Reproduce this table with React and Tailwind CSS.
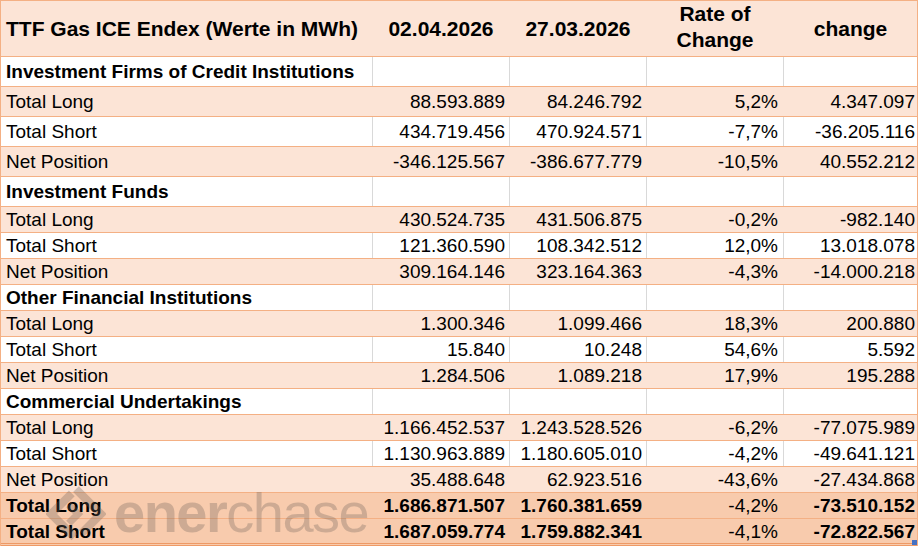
import React from "react";

const sections = [
  {
    title: "Investment Firms of Credit Institutions",
    tall: true,
    rows: [
      ["Total Long", "88.593.889", "84.246.792", "5,2%", "4.347.097"],
      ["Total Short", "434.719.456", "470.924.571", "-7,7%", "-36.205.116"],
      ["Net Position", "-346.125.567", "-386.677.779", "-10,5%", "40.552.212"],
    ],
  },
  {
    title: "Investment Funds",
    tall: true,
    rows: [
      ["Total Long", "430.524.735", "431.506.875", "-0,2%", "-982.140"],
      ["Total Short", "121.360.590", "108.342.512", "12,0%", "13.018.078"],
      ["Net Position", "309.164.146", "323.164.363", "-4,3%", "-14.000.218"],
    ],
  },
  {
    title: "Other Financial Institutions",
    rows: [
      ["Total Long", "1.300.346", "1.099.466", "18,3%", "200.880"],
      ["Total Short", "15.840", "10.248", "54,6%", "5.592"],
      ["Net Position", "1.284.506", "1.089.218", "17,9%", "195.288"],
    ],
  },
  {
    title: "Commercial Undertakings",
    rows: [
      ["Total Long", "1.166.452.537", "1.243.528.526", "-6,2%", "-77.075.989"],
      ["Total Short", "1.130.963.889", "1.180.605.010", "-4,2%", "-49.641.121"],
      ["Net Position", "35.488.648", "62.923.516", "-43,6%", "-27.434.868"],
    ],
  },
];

const totals = [
  ["Total Long", "1.686.871.507", "1.760.381.659", "-4,2%", "-73.510.152"],
  ["Total Short", "1.687.059.774", "1.759.882.341", "-4,1%", "-72.822.567"],
];

const grid = "grid grid-cols-[371px_137px_137px_137px_134px]";

function Row({ cells, bg, lines, h, bold, last }) {
  return (
    <div
      className={`${grid} ${bg} ${h} ${
        last ? "border-b-[3px] border-double border-[#ee9a66]" : "border-b border-[#f4b084]"
      }`}
    >
      <div className={`flex items-center pl-[5px] ${bold ? "font-bold" : ""}`}>{cells[0]}</div>
      {cells.slice(1).map((c, i) => (
        <div
          key={i}
          className={`flex items-center justify-end border-l ${lines} ${
            i === 2 ? "pr-[5px]" : i === 3 ? "pr-[2px]" : "pr-[4px]"
          } ${bold && i !== 2 ? "font-bold" : ""}`}
        >
          {c}
        </div>
      ))}
    </div>
  );
}

export default function App() {
  return (
    <div className="relative w-[923px] h-[549px] bg-white overflow-hidden font-['Liberation_Sans',Arial,sans-serif] text-[19px] leading-none text-black">
      <div className="w-[918px] border-l border-r border-t border-[#f4b084]">
        {/* Header */}
        <div className={`${grid} h-[56px] bg-[#fce4d6] border-b border-[#f4b084] font-bold text-[21px]`}>
          <div className="flex items-center pl-[5px] pb-[1px]">TTF Gas ICE Endex (Werte in MWh)</div>
          <div className="flex items-center justify-center border-l border-[#fce4d6]">02.04.2026</div>
          <div className="flex items-center justify-center border-l border-[#fce4d6]">27.03.2026</div>
          <div className="flex items-center justify-center border-l border-[#fce4d6] text-center leading-[26px] pb-[3px]">
            Rate of
            <br />
            Change
          </div>
          <div className="flex items-center justify-center border-l border-[#fce4d6]">change</div>
        </div>

        {sections.map((s) => (
          <React.Fragment key={s.title}>
            <Row
              cells={[s.title, "", "", "", ""]}
              bg="bg-white"
              lines="border-[#d9d9d9]"
              h={s.tall ? "h-[30px]" : "h-[26px]"}
              bold
            />
            {s.rows.map((r, i) => (
              <Row
                key={r[0]}
                cells={r}
                bg={i === 1 ? "bg-white" : "bg-[#fce4d6]"}
                lines={i === 1 ? "border-[#d9d9d9]" : "border-[#fce4d6]"}
                h={s.title === "Investment Firms of Credit Institutions" ? "h-[30px]" : "h-[26px]"}
              />
            ))}
          </React.Fragment>
        ))}

        {totals.map((r, i) => (
          <Row
            key={r[0]}
            cells={r}
            bg="bg-[#f8cbad]"
            lines="border-[#f8cbad]"
            h={i === 1 ? "h-[27px]" : "h-[26px]"}
            bold
            last={i === 1}
          />
        ))}
      </div>

      {/* Excel selection handle */}
      <div className="absolute left-[912px] top-[540px] w-[5px] h-[5px] bg-[#4472c4]" />

      {/* Watermark */}
      <div className="pointer-events-none absolute left-[46px] top-[484px] flex items-center gap-[8px] text-[rgba(105,95,90,0.3)]">
        <svg width="60" height="60" viewBox="0 0 58 58" fill="none">
          <path
            d="M29 5 L53 29 L29 53 L5 29 Z"
            stroke="rgba(105,95,90,0.3)"
            strokeWidth="8"
            strokeDasharray="60 10"
          />
          <path d="M22 20 L31 29 L22 38" stroke="rgba(105,95,90,0.3)" strokeWidth="7" />
        </svg>
        <div className="text-[56px] leading-none tracking-[-1.5px] pb-[2px]">
          <span className="font-bold">ener</span>
          <span>chase</span>
        </div>
      </div>
    </div>
  );
}
